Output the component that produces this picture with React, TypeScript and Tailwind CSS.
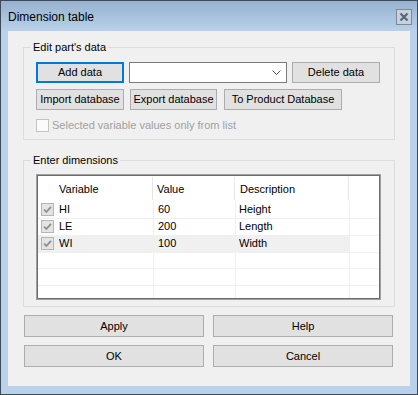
const Btn = ({
  label,
  className = "",
  focused = false,
}: {
  label: string;
  className?: string;
  focused?: boolean;
}) => (
  <button
    type="button"
    className={`h-[21px] bg-[#e1e1e1] text-[11px] leading-none text-black flex items-center justify-center ${
      focused ? "border-2 border-[#0078d7]" : "border border-[#adadad]"
    } ${className}`}
  >
    {label}
  </button>
);

const RowCheck = () => (
  <svg width="13" height="13" viewBox="0 0 13 13" className="shrink-0">
    <rect x="0.5" y="0.5" width="12" height="12" fill="#e4e4e4" stroke="#b5b5b5" />
    <path d="M3 6.5 L5.3 9 L10 3.8" fill="none" stroke="#8e8e8e" strokeWidth="1.8" />
  </svg>
);

const rows = [
  { name: "HI", value: "60", desc: "Height" },
  { name: "LE", value: "200", desc: "Length" },
  { name: "WI", value: "100", desc: "Width", selected: true },
];

export default function App() {
  return (
    <div className="w-[418px] h-[395px] border border-[#3d4a58] flex flex-col bg-[linear-gradient(to_bottom,#97b2cf,#b9d1ea_30px)] font-['Liberation_Sans',Arial,sans-serif] text-black">
      <div className="h-[30px] flex items-center justify-between pl-[7px] pr-[5px]">
        <span className="text-[12px] pt-[1px]">Dimension table</span>
        <div className="w-[16px] h-[16px] mt-[2px] border border-[#7e8a99] bg-[#c4d2e2] flex items-center justify-center">
          <svg width="10" height="10" viewBox="0 0 10 10">
            <path d="M1.5 1.5 L8.5 8.5 M8.5 1.5 L1.5 8.5" stroke="#5b6676" strokeWidth="2.2" />
          </svg>
        </div>
      </div>

      <div className="flex-1 mx-[7px] mb-[8px] bg-[#f0f0f0] px-[15px] pt-[10px] text-[11px]">
        <fieldset className="border border-[#dcdcdc] h-[99px] pl-[12px]">
          <legend className="-ml-[5px] px-[2px] leading-[13px]">Edit part's data</legend>
          <div className="flex items-center mt-[8px]">
            <Btn label="Add data" focused className="w-[88px] h-[20px]" />
            <div className="w-[158px] h-[21px] ml-[5px] bg-white border border-[#7a7a7a] flex items-center justify-end pr-[5px]">
              <svg width="9" height="6" viewBox="0 0 9 6">
                <path d="M0.5 0.5 L4.5 4.5 L8.5 0.5" fill="none" stroke="#555" strokeWidth="1" />
              </svg>
            </div>
            <Btn label="Delete data" className="w-[88px] ml-[5px]" />
          </div>
          <div className="flex items-center mt-[6px]">
            <Btn label="Import database" className="w-[88px]" />
            <Btn label="Export database" className="w-[87px] ml-[6px]" />
            <Btn label="To Product Database" className="w-[118px] ml-[7px]" />
          </div>
          <div className="flex items-center mt-[7px] text-[#a0a0a0]">
            <div className="w-[13px] h-[13px] bg-[#fbfbfb] border border-[#c3c3c3]" />
            <span className="ml-[3px]">Selected variable values only from list</span>
          </div>
        </fieldset>

        <fieldset className="border border-[#dcdcdc] h-[153px] mt-[14px] pl-[12px]">
          <legend className="-ml-[5px] px-[2px] leading-[13px]">Enter dimensions</legend>
          <div className="w-[345px] h-[126px] mt-[7px] border border-[#a0a0a0]">
            <div className="h-full border border-[#6d6d6d] bg-white overflow-hidden">
              <div className="grid grid-cols-[115px_82px_114px_1fr] h-[25px]">
                <div className="pl-[21px] pt-[2px] flex items-center border-r border-[#e5e5e5] my-[1px]">Variable</div>
                <div className="pl-[4px] pt-[2px] flex items-center border-r border-[#e5e5e5] my-[1px]">Value</div>
                <div className="pl-[5px] pt-[2px] flex items-center border-r border-[#e5e5e5] my-[1px]">Description</div>
                <div />
              </div>
              {rows.map((r) => (
                <div key={r.name} className="grid grid-cols-[115px_82px_114px_1fr] h-[17px]">
                  <div className={`flex items-center pl-[3px] gap-[5px] border-b border-[#f0f0f0] ${r.selected ? "bg-[#f0f0f0]" : ""}`}>
                    <RowCheck />
                    <span>{r.name}</span>
                  </div>
                  <div className={`flex items-center pl-[4px] border-l border-b border-[#f0f0f0] ${r.selected ? "bg-[#f0f0f0]" : ""}`}>{r.value}</div>
                  <div className={`flex items-center pl-[3px] border-l border-b border-[#f0f0f0] ${r.selected ? "bg-[#f0f0f0]" : ""}`}>{r.desc}</div>
                  <div className="border-l border-b border-[#f0f0f0]" />
                </div>
              ))}
              {[0, 1, 2].map((i) => (
                <div key={i} className="grid grid-cols-[115px_82px_114px_1fr] h-[17px]">
                  <div className="border-b border-[#f0f0f0]" />
                  <div className="border-l border-b border-[#f0f0f0]" />
                  <div className="border-l border-b border-[#f0f0f0]" />
                  <div className="border-l border-b border-[#f0f0f0]" />
                </div>
              ))}
            </div>
          </div>
        </fieldset>

        <div className="grid grid-cols-2 gap-x-[9px] gap-y-[8px] mt-[8px] ml-[1px] w-[369px]">
          <Btn label="Apply" className="h-[22px]" />
          <Btn label="Help" className="h-[22px]" />
          <Btn label="OK" className="h-[22px]" />
          <Btn label="Cancel" className="h-[22px]" />
        </div>
      </div>
    </div>
  );
}
